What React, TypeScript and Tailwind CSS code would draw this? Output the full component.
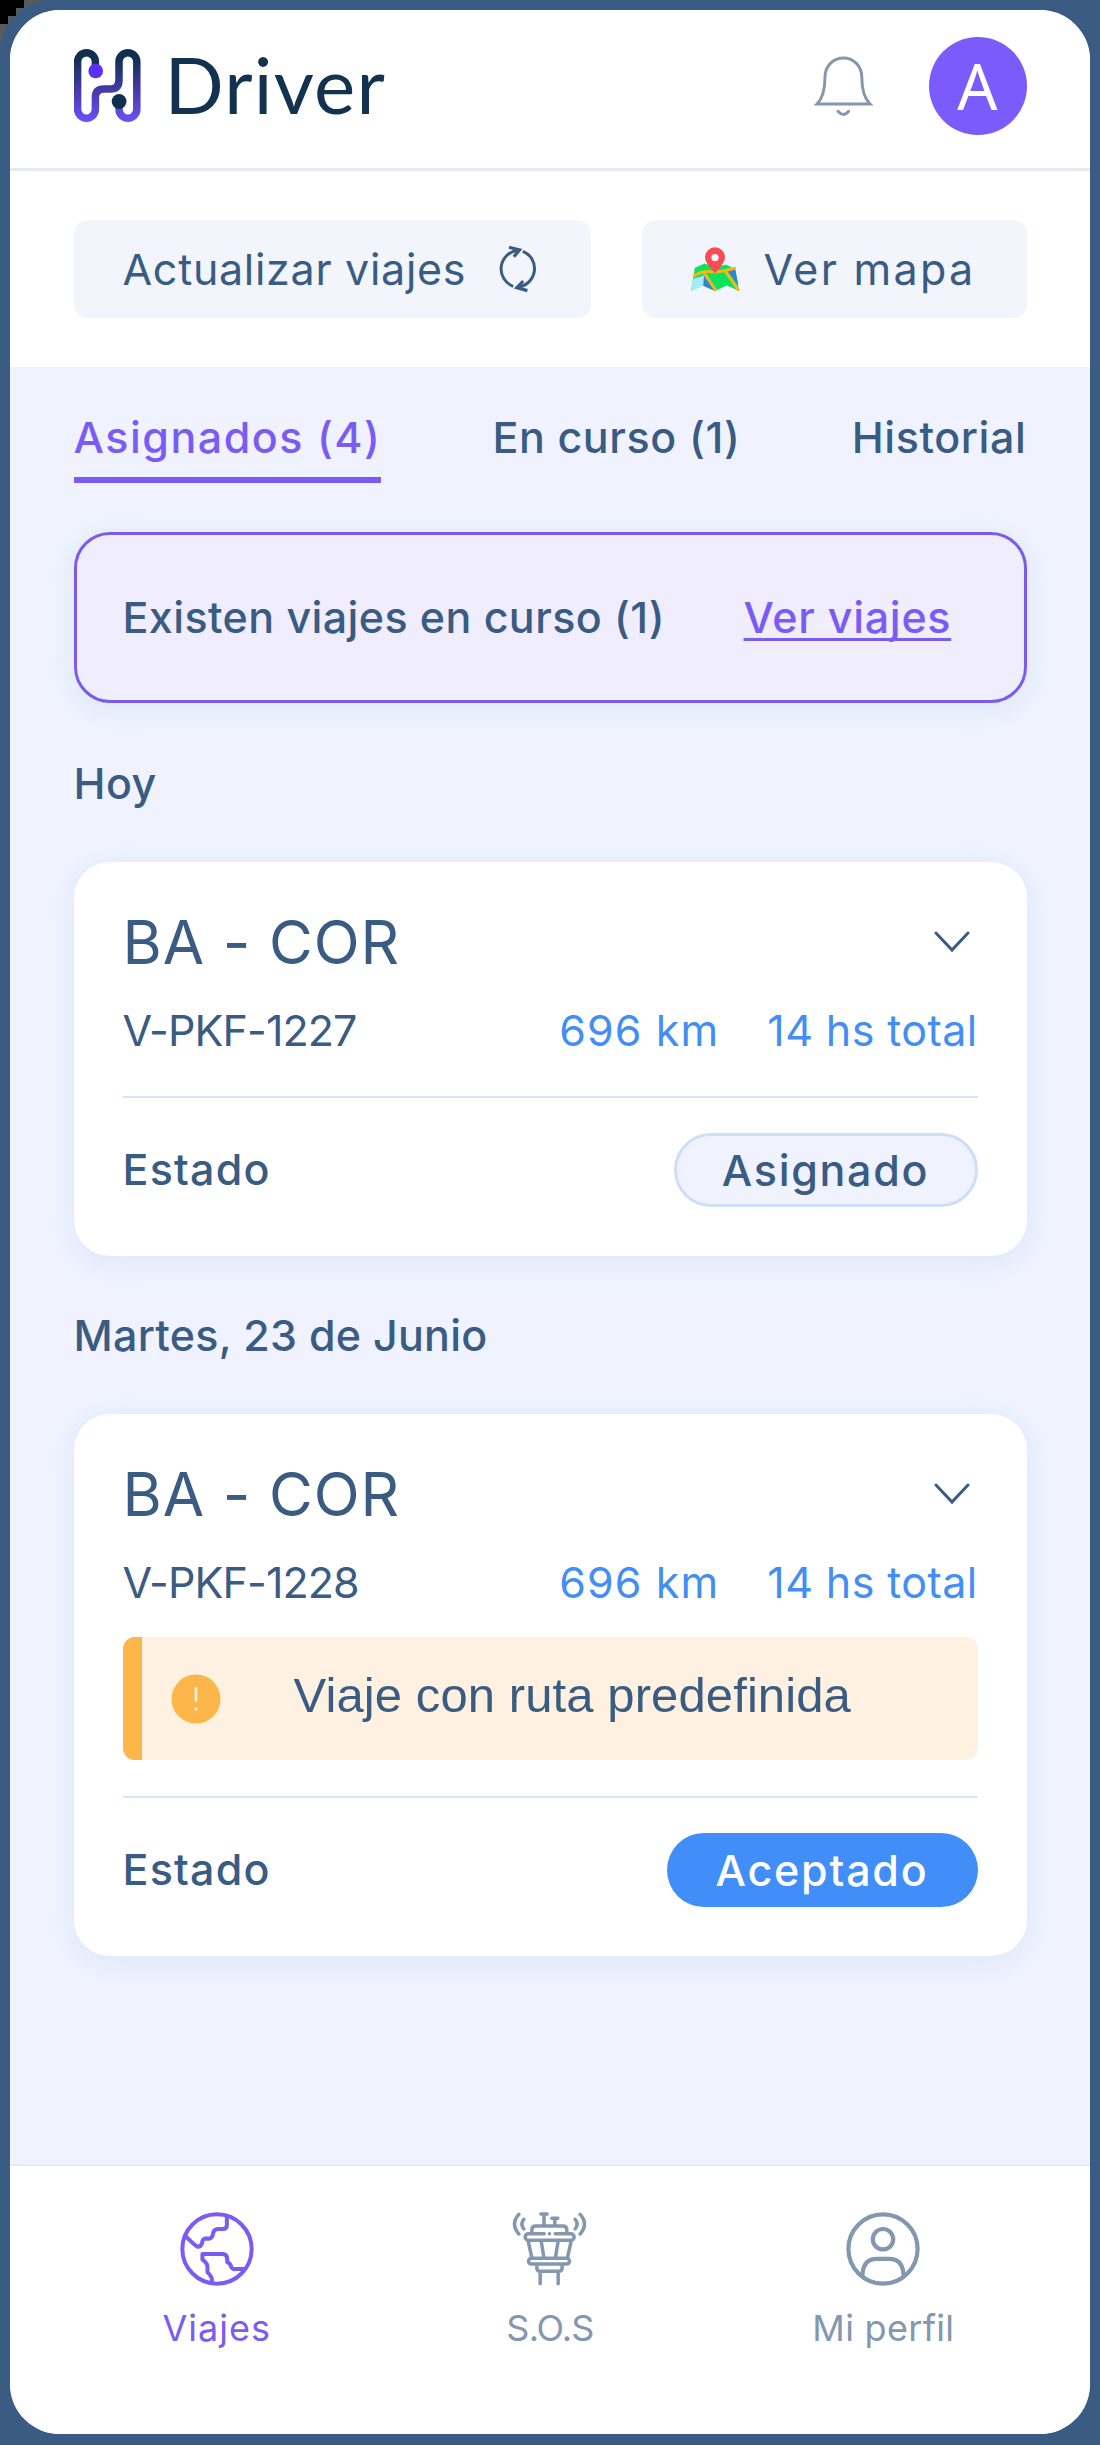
import React from "react";

function Logo() {
  return (
    <div className="flex items-center">
      <svg viewBox="73.5 46 67 80" className="h-[80px] w-[67px]" fill="none">
        <defs>
          <linearGradient id="brand" gradientUnits="userSpaceOnUse" x1="0" y1="52" x2="0" y2="122">
            <stop offset="0.08" stopColor="#10304d" />
            <stop offset="0.55" stopColor="#463bab" />
            <stop offset="1" stopColor="#6e50f8" />
          </linearGradient>
        </defs>
        <path
          d="M94.9 68V61.6A8.9 8.9 0 0 0 77.1 61.6V109.3A8.9 8.9 0 0 0 94.9 109.3V97.5Q94.9 89 103.5 89H110Q118.5 89 118.5 80V61.6A8.9 8.9 0 0 1 136.3 61.6V109.3A8.9 8.9 0 0 1 118.5 109.3V102"
          stroke="url(#brand)"
          strokeWidth="7.5"
        />
        <circle cx="95.2" cy="71" r="7.3" fill="#5b2ff6" />
        <circle cx="118.6" cy="101.5" r="7.4" fill="#10304d" />
      </svg>
      <span className="-mt-[4px] ml-[24px] font-[Lato,sans-serif] text-[78px] leading-[96px] tracking-[1.2px] text-[#12324f]">
        Driver
      </span>
    </div>
  );
}

function Bell() {
  return (
    <svg viewBox="813 54 61 64" className="h-[64px] w-[61px]" fill="none" stroke="#8397ac" strokeWidth="2.900">
      <path d="M817 104H870C864 98 861.8 88 861.8 77C861.8 66 853.5 58 843.4 58S825 66 825 77C825 88 823 98 817 104Z" />
      <path d="M838 111.3Q843.4 117.5 848.7 111.3" strokeLinecap="round" strokeWidth="3" />
    </svg>
  );
}

function Refresh() {
  return (
    <svg viewBox="496 244 44 50" className="h-[50px] w-[44px]" fill="none" stroke="#3a5c82" strokeWidth="3">
      <path d="M513.2 286.3A18.6 18.6 0 0 1 517.5 250.4" />
      <path d="M509 247.2L519.6 250L513.8 256.8" strokeWidth="3.2" />
      <path d="M522.8 251.3A18.6 18.6 0 0 1 518.5 287" />
      <path d="M527.4 290.6L516.8 287.6L523.2 281" strokeWidth="3.2" />
    </svg>
  );
}

function MapIcon() {
  return (
    <svg viewBox="60 50 150 136" className="h-[45px] w-[50px]">
      <path d="M74 113L104 100L134 112L168 103L196 117L208 183L171 166L135 183L98 166L62 183Z" fill="#0be35b" />
      <path d="M68 147L102 136L100 166L62 183Z" fill="#a5ecfb" />
      <path d="M102 134L135 183L100 167Z" fill="#2f86d6" />
      <path d="M170 120L196 117L206 166Z" fill="#2f86d6" />
      <path
        d="M69 139Q98 118 134 126Q160 124 198 113M102 128L138 182M166 122L207 182"
        fill="none"
        stroke="#f3b71e"
        strokeWidth="9"
      />
      <path d="M135 130C124 115 105 99 105 81A30 30 0 0 1 165 81C165 99 146 115 135 130Z" fill="#fb4a55" />
      <circle cx="135" cy="82" r="11" fill="#f6faff" />
    </svg>
  );
}

function Globe() {
  return (
    <svg viewBox="30 36.5 221 221" className="size-[74px]" fill="none" stroke="#7a5cf5" strokeWidth="12">
      <circle cx="140.5" cy="147" r="103.5" />
      <path
        d="M170 48V75Q170 87 158 87.500H142Q131 89 129 100Q127 114 118 116H104Q96 118 96 130Q90 143 80 139Q72 134 45 107"
        strokeLinejoin="round"
      />
      <path
        d="M125 248V234Q122 226 112 216V198Q110 188 97 178V162H158Q170 163 171 176V186Q181 190 183 201Q186 207 195 207H224"
        strokeLinejoin="round"
      />
    </svg>
  );
}

function Tower() {
  return (
    <svg
      viewBox="38 36 224 222"
      className="h-[74px] w-[75px]"
      fill="none"
      stroke="#8397ae"
      strokeWidth="10.500"
      strokeLinecap="round"
    >
      <path d="M58 43Q32 72 58 102M73 58Q61 72 73 87M242 43Q268 72 242 102M227 58Q239 72 227 87" />
      <path d="M124 42H143M133.500 44V76M157 55H175M166 57V76" />
      <path d="M97 97V90Q97 78 109 78H190Q202 78 202 90V97" />
      <path d="M134 101H87A10 10 0 0 0 87 121H214A10 10 0 0 0 214 101H167M150 101H150.200" />
      <path d="M86 123L97 173M125 123L133 172M176 123L168 172M215 123L204 173" />
      <rect x="87" y="175" width="123" height="17" rx="8.5" />
      <path d="M112 195V203Q112 214 123 214H177Q188 214 188 203V195M122 216V251M176 216V251" />
    </svg>
  );
}

function Person() {
  return (
    <svg viewBox="-37 -37 74 74" className="size-[74px]" fill="none" stroke="#8397ae" strokeWidth="4.200">
      <circle r="34.6" />
      <circle cy="-9.8" r="10.2" />
      <path d="M-20.500 28V25Q-19.500 9.800 -6 9.800H6Q19.500 9.800 20.500 25V28" />
    </svg>
  );
}

function Alert() {
  return (
    <div className="mt-[30px] flex h-[123px] items-center overflow-hidden rounded-[12px] bg-[#fff1e1]">
      <div className="h-full w-[19px] bg-[#fcb649]" />
      <svg viewBox="0 0 50 50" className="ml-[29px] size-[50px]">
        <circle cx="25" cy="25" r="24.500" fill="#fcb649" />
        <path d="M25 13.500V27.500M25 33.500V36.500" stroke="#fff1e1" strokeWidth="2.600" />
      </svg>
      <span className="-mt-[7px] ml-[73px] whitespace-nowrap font-['Liberation_Sans',sans-serif] text-[49px] leading-[56px] tracking-[0.1px]">
        Viaje con ruta predefinida
      </span>
    </div>
  );
}

type TripProps = { code: string; alert?: boolean; badge: React.ReactNode };

function TripCard({ code, alert, badge }: TripProps) {
  return (
    <section className="mt-[54px] rounded-[36px] bg-white px-[49px] pt-[45px] pb-[49px] shadow-[0_6px_28px_2px_rgba(150,185,215,0.2)]">
      <div className="flex items-center justify-between">
        <h2 className="text-[60px] leading-[70px] tracking-[0.9px]">BA - COR</h2>
        <svg viewBox="0 0 36 24" className="mr-[8px] h-[24px] w-[36px]" fill="none" stroke="#3a5c82" strokeWidth="3">
          <path d="M2 3L18 20L34 3" strokeLinecap="round" />
        </svg>
      </div>
      <div className="mt-[28px] flex justify-between text-[43px] leading-[50px]">
        <span className="tracking-[-0.9px]">{code}</span>
        <div className="flex gap-[48px] text-[#438ef4]">
          <span className="tracking-[1.1px]">696 km</span>
          <span className="tracking-[0.4px]">14 hs total</span>
        </div>
      </div>
      {alert && <Alert />}
      <hr className={alert ? "mt-[36px] border-t-2 border-[#d5e6f8]" : "mt-[41px] border-t-2 border-[#d5e6f8]"} />
      <div className="mt-[35px] flex h-[74px] items-center justify-between text-[43px] leading-[50px] font-medium">
        <span className="-mt-[2px] tracking-[1.2px]">Estado</span>
        {badge}
      </div>
    </section>
  );
}

export default function App() {
  return (
    <div className="relative h-[2445px] w-[1100px] overflow-hidden bg-[#3a5c82] p-[10px] pb-[11px] font-[Inter,sans-serif] text-[#3a5c82]">
      <svg viewBox="0 0 48 48" className="absolute top-0 left-0 size-[48px]" shapeRendering="crispEdges">
        <path d="M0 0H44Q12 8 2 42H0Z" fill="#5a5a5c" />
        <path d="M0 0H48Q8 8 2 44L1 44Q5 8 44 0Z" fill="#3a5c82" />
        <path d="M0 0H24V8H16V16H8V24H0Z" fill="#000" />
      </svg>
      <main className="relative flex h-full flex-col overflow-hidden rounded-[50px] bg-[#f0f3ff]">
        <header className="flex h-[161px] shrink-0 items-center justify-between border-b-[3px] border-[#e7eaf6] bg-white px-[63.5px]">
          <div className="-mt-[7px]">
            <Logo />
          </div>
          <div className="-mt-[7px] flex items-center gap-[55px]">
            <Bell />
            <div className="flex size-[98px] items-center justify-center rounded-full bg-[#7b5bfb] font-['Noto_Sans',sans-serif] text-[63px] leading-none text-white">
              A
            </div>
          </div>
        </header>
        <div className="flex h-[196px] shrink-0 items-start justify-between bg-white px-[63.5px] pt-[49px] text-[43px] leading-[50px]">
          <button className="flex h-[98px] w-[517.5px] items-center rounded-[14px] bg-[#f2f6fc] pl-[49px]">
            <span className="w-[373px] text-left tracking-[0.7px]">Actualizar viajes</span>
            <Refresh />
          </button>
          <button className="flex h-[98px] w-[385px] items-center rounded-[14px] bg-[#f2f6fc] pl-[48px]">
            <MapIcon />
            <span className="ml-[24px] tracking-[2.3px]">Ver mapa</span>
          </button>
        </div>
        <div className="flex grow flex-col px-[63.5px] pt-[45px] text-[43px] leading-[50px]">
          <nav className="flex justify-between font-medium">
            <a className="border-b-[6px] border-[#7a5cf5] pb-[15px] tracking-[1.5px] text-[#7a5cf5]">Asignados (4)</a>
            <a className="tracking-[0.6px]">En curso (1)</a>
            <a className="tracking-[0.6px]">Historial</a>
          </nav>
          <div className="mt-[49px] flex h-[171px] items-center rounded-[36px] border-[3px] border-[#7a5cec] bg-[#f0edff] pl-[46px] font-medium shadow-[0_6px_28px_2px_rgba(150,185,215,0.2)]">
            <span className="-mt-[2px] w-[621px] whitespace-nowrap tracking-[0.4px]">Existen viajes en curso (1)</span>
            <a className="-mt-[2px] tracking-[0.7px] text-[#7a5cf5] underline decoration-[2.5px] underline-offset-[5px] [text-decoration-skip-ink:none]">
              Ver viajes
            </a>
          </div>
          <h3 className="mt-[55px] font-medium tracking-[0.4px]">Hoy</h3>
          <TripCard
            code="V-PKF-1227"
            badge={
              <span className="flex h-[74px] w-[304px] items-center justify-center rounded-full border-[3px] border-[#cddff6] bg-[#f0f3ff] tracking-[1.7px]">
                Asignado
              </span>
            }
          />
          <h3 className="mt-[54px] font-medium tracking-[0.25px]">Martes, 23 de Junio</h3>
          <TripCard
            code="V-PKF-1228"
            alert
            badge={
              <span className="flex h-[74px] w-[311px] items-center justify-center rounded-full bg-[#418ef8] tracking-[1.8px] text-white">
                Aceptado
              </span>
            }
          />
        </div>
        <footer className="grid h-[270px] shrink-0 grid-cols-3 border-t-2 border-[#e7ebf4] bg-white px-[40px] pt-[46px] text-[36px] leading-[44px] text-[#8397ae]">
          <div className="flex flex-col items-center gap-[20px] text-[#7a5cf5]">
            <Globe />
            <span className="tracking-[1px]">Viajes</span>
          </div>
          <div className="flex flex-col items-center gap-[20px]">
            <Tower />
            <span className="tracking-[-0.8px]">S.O.S</span>
          </div>
          <div className="flex flex-col items-center gap-[20px]">
            <Person />
            <span className="tracking-[0.3px]">Mi perfil</span>
          </div>
        </footer>
      </main>
    </div>
  );
}
